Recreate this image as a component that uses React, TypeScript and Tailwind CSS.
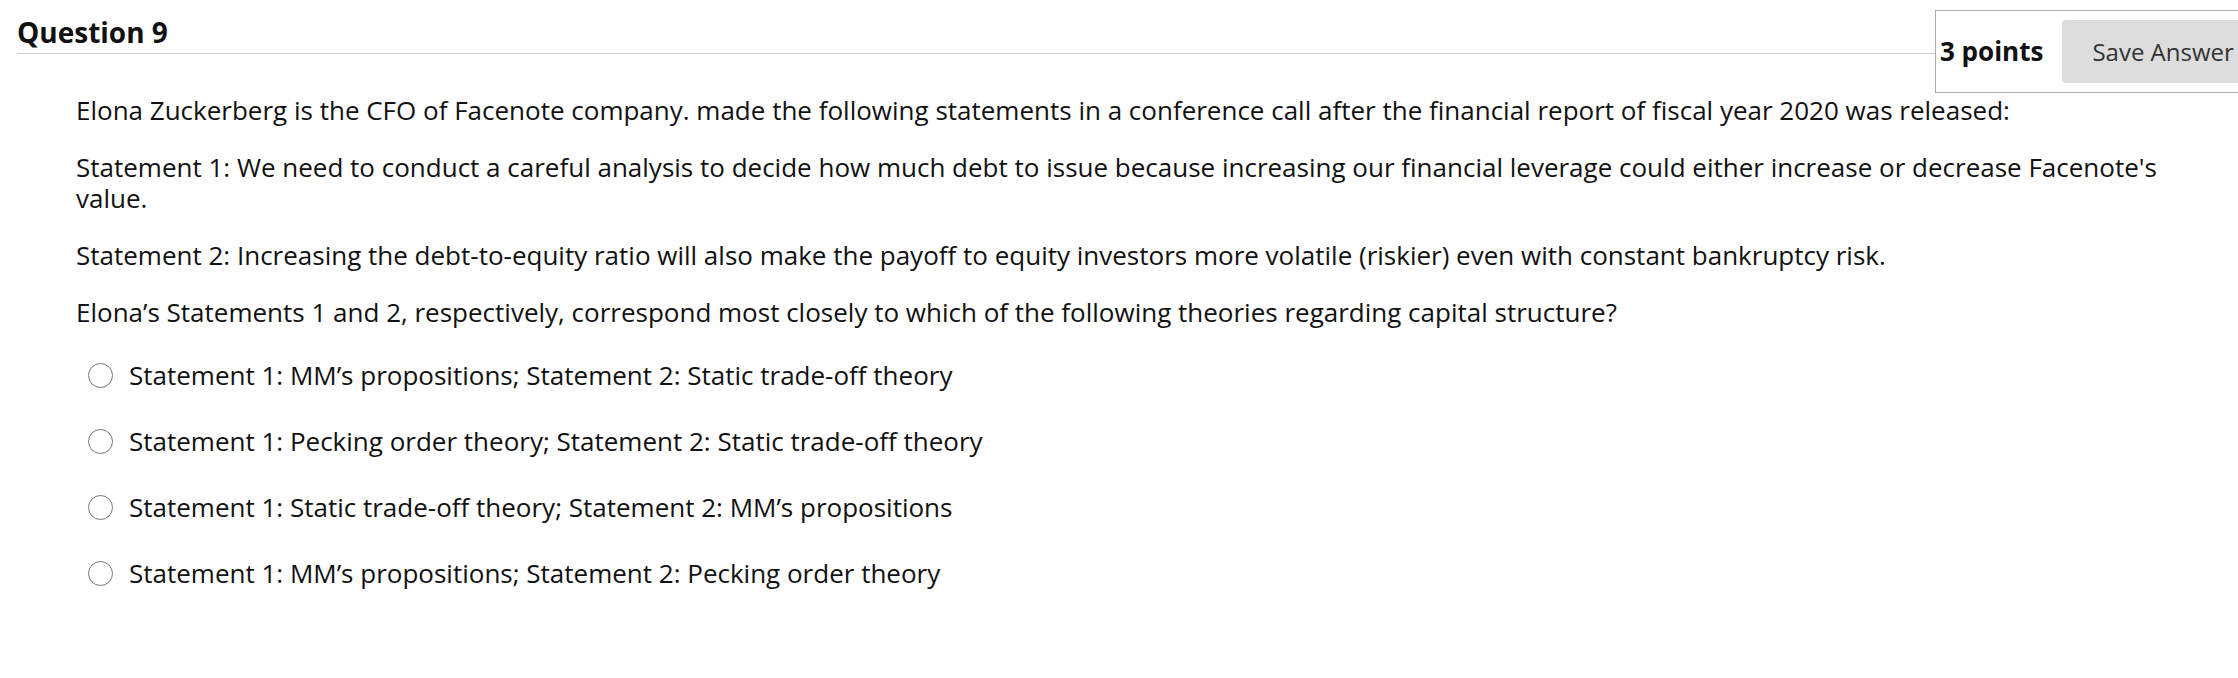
const options = [
  "Statement 1: MM’s propositions; Statement 2: Static trade-off theory",
  "Statement 1: Pecking order theory; Statement 2: Static trade-off theory",
  "Statement 1: Static trade-off theory; Statement 2: MM’s propositions",
  "Statement 1: MM’s propositions; Statement 2: Pecking order theory",
];

export default function App() {
  return (
    <div className="min-h-screen bg-white overflow-hidden font-['Open_Sans',sans-serif] text-[#111]">
      {/* question header */}
      <div className="flex items-start pt-[10px] pl-[17px] w-[2400px]">
        <div className="w-[1918px] shrink-0 h-[44px] border-b border-[#ccc] flex items-center">
          <h2 className="text-[28px] font-bold leading-none">Question 9</h2>
        </div>
        <div className="shrink-0 h-[83px] border border-[#aaa] flex items-center pl-[4px] pr-[9px] gap-[19px]">
          <span className="text-[26px] font-bold">3 points</span>
          <button className="h-[63px] px-[30px] rounded-[4px] bg-[#ddd] text-[24px] text-[#333]">
            Save Answer
          </button>
        </div>
      </div>

      {/* question body */}
      <div className="pl-[76px] pr-[53px] pt-[2px] text-[26px] leading-[31px]">
        <p>
          Elona Zuckerberg is the CFO of Facenote company. made the following statements in a conference call after the financial report of fiscal year 2020 was released:
        </p>
        <p className="mt-[26px]">
          Statement 1: We need to conduct a careful analysis to decide how much debt to issue because increasing our financial leverage could either increase or decrease Facenote's value.
        </p>
        <p className="mt-[26px]">
          Statement 2: Increasing the debt-to-equity ratio will also make the payoff to equity investors more volatile (riskier) even with constant bankruptcy risk.
        </p>
        <p className="mt-[26px]">
          Elona’s Statements 1 and 2, respectively, correspond most closely to which of the following theories regarding capital structure?
        </p>

        <div className="mt-[32px] flex flex-col gap-[35px]">
          {options.map((o) => (
            <label key={o} className="flex items-center pl-[12px] gap-[16px]">
              <span className="w-[25px] h-[25px] rounded-full border-[1.5px] border-[#777] bg-white shrink-0" />
              <span>{o}</span>
            </label>
          ))}
        </div>
      </div>
    </div>
  );
}
